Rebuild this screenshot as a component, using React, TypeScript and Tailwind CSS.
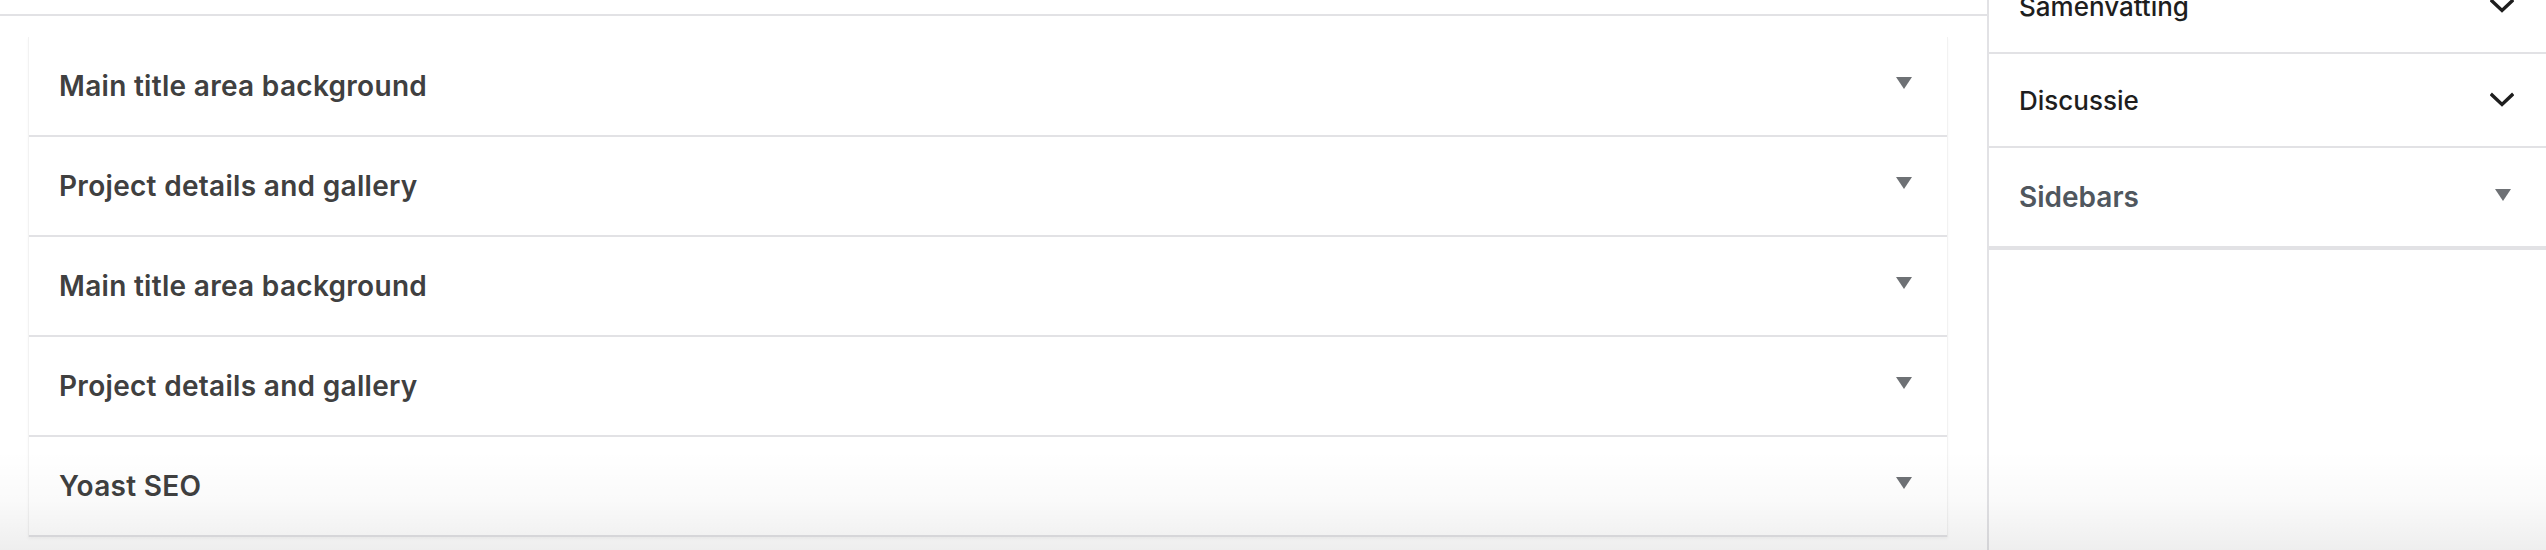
import React from "react";

const font = { fontFamily: "Inter, 'Noto Sans', sans-serif" };

function Triangle({ className = "" }: { className?: string }) {
  return (
    <svg width="16" height="12" viewBox="0 0 16 12" className={className}>
      <polygon points="0,0 16,0 8,12" fill="#6e7175" />
    </svg>
  );
}

function Chevron() {
  return (
    <svg width="24" height="16" viewBox="0 0 24 16">
      <polyline
        points="2,3 12,12.5 22,3"
        fill="none"
        stroke="#1e1e1e"
        strokeWidth="3.4"
        strokeLinecap="square"
        strokeLinejoin="miter"
      />
    </svg>
  );
}

const rows = [
  "Main title area background",
  "Project details and gallery",
  "Main title area background",
  "Project details and gallery",
  "Yoast SEO",
];

export default function App() {
  return (
    <div
      className="relative flex h-[550px] w-[2546px] overflow-hidden bg-white"
      style={font}
    >
      <main className="flex flex-1 flex-col">
        <div className="h-[16px] shrink-0 border-b-2 border-[#e2e2e5]" />
        <div className="pl-[28px] pr-[39px] pt-[21px]">
          <div className="border-x border-[#f2f2f2] bg-white shadow-[0_2px_3px_rgba(0,0,0,0.04)]">
            {rows.map((r, i) => (
              <div
                key={i}
                className="flex h-[100px] items-center justify-between border-b-2 border-[#e2e2e5] pl-[30px] pr-[35px]"
              >
                <span className="text-[28px] font-semibold tracking-[0.3px] text-[#404040]">
                  {r}
                </span>
                <Triangle className="mb-[6px]" />
              </div>
            ))}
          </div>
        </div>
      </main>
      <aside className="w-[559px] shrink-0 border-l-2 border-[#e2e2e5] bg-white">
        <div className="-mt-[40px]">
          <div className="flex h-[94px] items-center justify-between border-b-2 border-[#e2e2e5] pl-[30px] pr-[32px]">
            <span className="text-[26px] font-medium text-[#1e1e1e]">
              Samenvatting
            </span>
            <Chevron />
          </div>
          <div className="flex h-[94px] items-center justify-between border-b-2 border-[#e2e2e5] pl-[30px] pr-[32px]">
            <span className="text-[26px] font-medium text-[#1e1e1e]">
              Discussie
            </span>
            <Chevron />
          </div>
          <div className="flex h-[102px] items-center justify-between border-b-4 border-[#e2e2e5] pl-[30px] pr-[35px]">
            <span className="text-[28px] font-semibold text-[#50575e]">
              Sidebars
            </span>
            <Triangle className="mb-[4px]" />
          </div>
        </div>
      </aside>
      <div className="pointer-events-none absolute inset-x-0 bottom-0 h-[100px] bg-linear-to-b from-[rgba(0,0,0,0)] via-[rgba(0,0,0,0.02)] to-[rgba(0,0,0,0.065)]" />
    </div>
  );
}
